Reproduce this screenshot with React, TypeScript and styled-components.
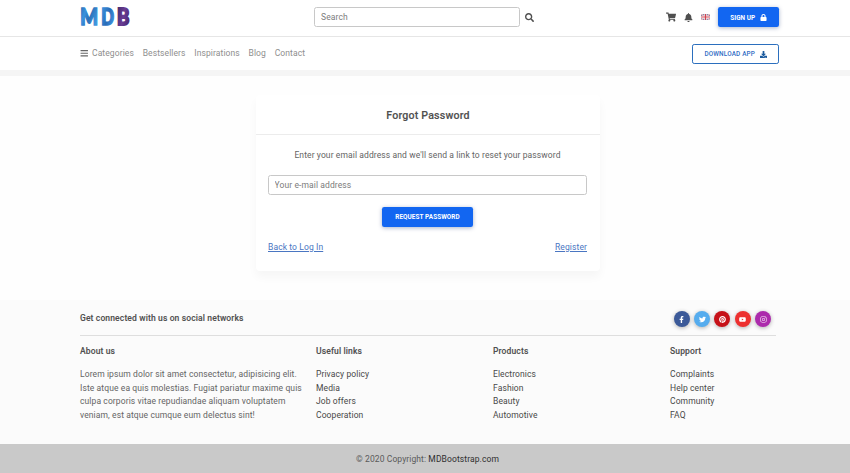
import React from "react";
import styled, { createGlobalStyle } from "styled-components";
import {
  FaBars,
  FaBell,
  FaDownload,
  FaFacebookF,
  FaInstagram,
  FaLock,
  FaPinterest,
  FaSearch,
  FaShoppingCart,
  FaTwitter,
  FaYoutube,
} from "react-icons/fa";

const GlobalStyle = createGlobalStyle`
  *, *::before, *::after { box-sizing: border-box; }
  body {
    margin: 0;
    background: #fefefe;
    color: #5a5a5a;
    font-family: Roboto, "Liberation Sans", sans-serif;
    font-size: 8.53px;
    line-height: 13.65px;
    letter-spacing: 0.097px;
  }
  a { color: inherit; text-decoration: none; }
`;

const Page = styled.div`
  display: flex;
  flex-direction: column;
  height: 473px;
  overflow: hidden;
`;

const TopBar = styled.header`
  display: grid;
  grid-template-columns: 234px 1fr auto;
  align-items: center;
  height: 37px;
  padding: 0 71px 2px 80px;
  border-bottom: 1px solid #e6e6e6;
  background: #fff;
`;

const Logo = styled.a`
  display: flex;
  font-family: Lato, sans-serif;
  font-weight: 900;
  font-size: 22.5px;
  letter-spacing: 0;
`;

const SearchForm = styled.form`
  display: flex;
  align-items: center;
  gap: 5px;
  color: #4f4f4f;
  font-size: 9px;
`;

const Input = styled.input`
  display: block;
  width: 100%;
  height: 20px;
  padding: 0 6px;
  border: 1px solid #c8c8c8;
  border-radius: 2.5px;
  background: #fff;
  color: #4f4f4f;
  font: inherit;
  font-size: 8.53px;
  letter-spacing: inherit;
  outline: none;
  &::placeholder { color: #7c7c7c; opacity: 1; }
`;

const SearchInput = styled(Input)`
  width: 206px;
`;

const EmailInput = styled(Input)`
  padding-left: 5.5px;
`;

const Tools = styled.div`
  display: flex;
  align-items: center;
  color: #4f4f4f;
`;

const ToolLink = styled.a<{ $gap: number }>`
  display: flex;
  margin-right: ${(p) => p.$gap}px;
  font-size: 9px;
`;

const Button = styled.button<{ $outline?: boolean; $width: number }>`
  display: inline-flex;
  align-items: center;
  justify-content: center;
  gap: 4.5px;
  width: ${(p) => p.$width}px;
  height: 20px;
  padding: 1px 0 0;
  border: ${(p) => (p.$outline ? "1px solid #2b6fbe" : "0")};
  border-radius: 2.2px;
  background: ${(p) => (p.$outline ? "#fff" : "#1266f1")};
  color: ${(p) => (p.$outline ? "#2f6cc4" : "#fff")};
  box-shadow: ${(p) => (p.$outline ? "none" : "0 1px 4px rgba(0, 40, 110, 0.35)")};
  font: 500 6.4px/10px Roboto, sans-serif;
  font-weight: ${(p) => (p.$outline ? 500 : 700)};
  letter-spacing: ${(p) => (p.$outline ? 0.16 : 0.08)}px;
  text-transform: uppercase;
  svg { color: ${(p) => (p.$outline ? "#1b5a9e" : "#fff")}; }
`;

const NavBar = styled.nav`
  display: flex;
  align-items: center;
  justify-content: space-between;
  height: 33px;
  padding: 0 71px 0 80px;
  background: #fff;
`;

const NavLinks = styled.div`
  display: flex;
  align-items: center;
  gap: 8.7px;
  color: #8e8e8e;
  a { display: flex; align-items: center; gap: 3.5px; }
  svg { color: #666; font-size: 8.5px; }
`;

const Band = styled.div`
  flex: none;
  height: 6px;
  background: #f5f5f5;
`;

const Main = styled.main`
  height: 224px;
  padding-top: 19px;
`;

const Card = styled.section`
  width: 344px;
  height: 176px;
  margin-left: 256px;
  border-radius: 4px;
  background: #fff;
  box-shadow: 0 6px 10px rgba(0, 0, 0, 0.035);
`;

const CardTitle = styled.h1`
  height: 40px;
  margin: 0;
  padding-top: 14px;
  border-bottom: 1px solid #ececec;
  color: #4f4f4f;
  font-size: 10.67px;
  font-weight: 500;
  -webkit-text-stroke: 0.12px;
  letter-spacing: 0.18px;
  line-height: 13px;
  text-align: center;
`;

const CardBody = styled.div`
  display: flex;
  flex-direction: column;
  align-items: center;
  padding: 14px 13px 0 12px;
`;

const Lead = styled.p`
  margin: 0 0 12px;
  color: #646464;
`;

const Submit = styled.div`
  margin: 12px 0 14px;
  line-height: 0;
`;

const CardLinks = styled.div`
  display: flex;
  justify-content: space-between;
  width: 100%;
  color: #4a76c2;
  a { text-decoration: underline; }
`;

const Footer = styled.footer`
  height: 144px;
  padding: 0 74px 0 80px;
  background: #fbfbfb;
`;

const SocialRow = styled.div`
  display: flex;
  align-items: center;
  justify-content: space-between;
  height: 36px;
  padding: 3px 5px 0 0;
  border-bottom: 1px solid #dedede;
  color: #4f4f4f;
  font-weight: 500;
  letter-spacing: 0.13px;
  -webkit-text-stroke: 0.1px;
`;

const SocialLinks = styled.div`
  display: flex;
  gap: 4.3px;
`;

const SocialLink = styled.a<{ $color: string }>`
  display: grid;
  place-items: center;
  width: 16px;
  height: 16px;
  border-radius: 50%;
  background: ${(p) => p.$color};
  box-shadow: 0 1px 4px rgba(0, 0, 0, 0.3);
  color: #fff;
  font-size: 7px;
`;

const Columns = styled.div`
  display: grid;
  grid-template-columns: 236px 177px 177px 1fr;
  padding-top: 9.4px;
`;

const ColumnTitle = styled.h2`
  margin: 0 0 8.8px;
  color: #4f4f4f;
  font-size: 8.53px;
  font-weight: 500;
  letter-spacing: 0.13px;
  -webkit-text-stroke: 0.1px;
  line-height: 13.65px;
`;

const About = styled.p`
  margin: 0;
  color: #646464;
  white-space: nowrap;
`;

const LinkList = styled.ul`
  margin: 0;
  padding: 0;
  list-style: none;
  color: #484848;
`;

const Copyright = styled.div`
  height: 29px;
  padding: 9px 0 0 5px;
  background: #c9c9c9;
  text-align: center;
  a { color: #303030; }
`;

const LogoMark = () => (
  <svg width="54" height="32" viewBox="0 0 54 32" overflow="visible">
    <defs>
      <linearGradient id="blueM" x2="1" y2="0.5">
        <stop offset="0" stopColor="#2867ad" />
        <stop offset="0.35" stopColor="#3991dc" />
        <stop offset="0.6" stopColor="#2b70b8" />
        <stop offset="1" stopColor="#3e96df" />
      </linearGradient>
      <linearGradient id="blueD" x2="1" y2="0.6">
        <stop offset="0" stopColor="#3f9be6" />
        <stop offset="0.6" stopColor="#2a6cb8" />
        <stop offset="1" stopColor="#3c8fdc" />
      </linearGradient>
      <linearGradient id="violet" x2="1" y2="0.5">
        <stop offset="0" stopColor="#3c2766" />
        <stop offset="0.6" stopColor="#6a3d94" />
        <stop offset="1" stopColor="#4d2b78" />
      </linearGradient>
    </defs>
    <text x="0.2" y="24.3" textLength="17.8" lengthAdjust="spacingAndGlyphs" fill="url(#blueM)" stroke="url(#blueM)" strokeWidth="1.6">M</text>
    <text x="21.2" y="24.3" textLength="12.8" lengthAdjust="spacingAndGlyphs" fill="url(#blueD)" stroke="url(#blueD)" strokeWidth="1.6">D</text>
    <text x="37" y="24.3" textLength="12.4" lengthAdjust="spacingAndGlyphs" fill="url(#violet)" stroke="url(#violet)" strokeWidth="1.8">B</text>
  </svg>
);

const FlagIcon = () => (
  <svg width="9" height="6" viewBox="0 0 18 12" aria-label="English">
    <path fill="#777d9f" d="M0 0h18v12H0z" />
    <path stroke="#fff" strokeWidth="2.4" d="m0 0 18 12M18 0 0 12" />
    <path stroke="#ce5460" strokeWidth="1" d="m0 0 18 12M18 0 0 12" />
    <path stroke="#fff" strokeWidth="4.5" d="M9 0v12M0 6h18" />
    <path stroke="#d04450" strokeWidth="2.4" d="M9 0v12M0 6h18" />
  </svg>
);

const social = [
  { name: "Facebook", color: "#3b5998", Icon: FaFacebookF },
  { name: "Twitter", color: "#55acee", Icon: FaTwitter },
  { name: "Pinterest", color: "#c61118", Icon: FaPinterest },
  { name: "YouTube", color: "#ed302f", Icon: FaYoutube },
  { name: "Instagram", color: "#ac2bac", Icon: FaInstagram },
];

const linkColumns = [
  { title: "Useful links", links: ["Privacy policy", "Media", "Job offers", "Cooperation"] },
  { title: "Products", links: ["Electronics", "Fashion", "Beauty", "Automotive"] },
  { title: "Support", links: ["Complaints", "Help center", "Community", "FAQ"] },
];

export default function App() {
  return (
    <Page>
      <GlobalStyle />
      <TopBar>
        <Logo href="#"><LogoMark /></Logo>
        <SearchForm>
          <SearchInput placeholder="Search" />
          <FaSearch />
        </SearchForm>
        <Tools>
          <ToolLink href="#" $gap={8}><FaShoppingCart size={10} /></ToolLink>
          <ToolLink href="#" $gap={8}><FaBell /></ToolLink>
          <ToolLink href="#" $gap={8}><FlagIcon /></ToolLink>
          <Button $width={61}>Sign up <FaLock size={7} /></Button>
        </Tools>
      </TopBar>
      <NavBar>
        <NavLinks>
          <a href="#"><FaBars />Categories</a>
          <a href="#">Bestsellers</a>
          <a href="#">Inspirations</a>
          <a href="#">Blog</a>
          <a href="#">Contact</a>
        </NavLinks>
        <Button $outline $width={87}>Download app <FaDownload size={7} /></Button>
      </NavBar>
      <Band />
      <Main>
        <Card>
          <CardTitle>Forgot Password</CardTitle>
          <CardBody>
            <Lead>Enter your email address and we'll send a link to reset your password</Lead>
            <EmailInput placeholder="Your e-mail address" />
            <Submit><Button $width={91}>Request password</Button></Submit>
            <CardLinks>
              <a href="#">Back to Log In</a>
              <a href="#">Register</a>
            </CardLinks>
          </CardBody>
        </Card>
      </Main>
      <Footer>
        <SocialRow>
          <span>Get connected with us on social networks</span>
          <SocialLinks>
            {social.map(({ name, color, Icon }) => (
              <SocialLink key={name} href="#" aria-label={name} $color={color}><Icon /></SocialLink>
            ))}
          </SocialLinks>
        </SocialRow>
        <Columns>
          <div>
            <ColumnTitle>About us</ColumnTitle>
            <About>
              Lorem ipsum dolor sit amet consectetur, adipisicing elit.<br />
              Iste atque ea quis molestias. Fugiat pariatur maxime quis<br />
              culpa corporis vitae repudiandae aliquam voluptatem<br />
              veniam, est atque cumque eum delectus sint!
            </About>
          </div>
          {linkColumns.map(({ title, links }) => (
            <div key={title}>
              <ColumnTitle>{title}</ColumnTitle>
              <LinkList>
                {links.map((link) => <li key={link}><a href="#">{link}</a></li>)}
              </LinkList>
            </div>
          ))}
        </Columns>
      </Footer>
      <Copyright>© 2020 Copyright: <a href="#">MDBootstrap.com</a></Copyright>
    </Page>
  );
}
